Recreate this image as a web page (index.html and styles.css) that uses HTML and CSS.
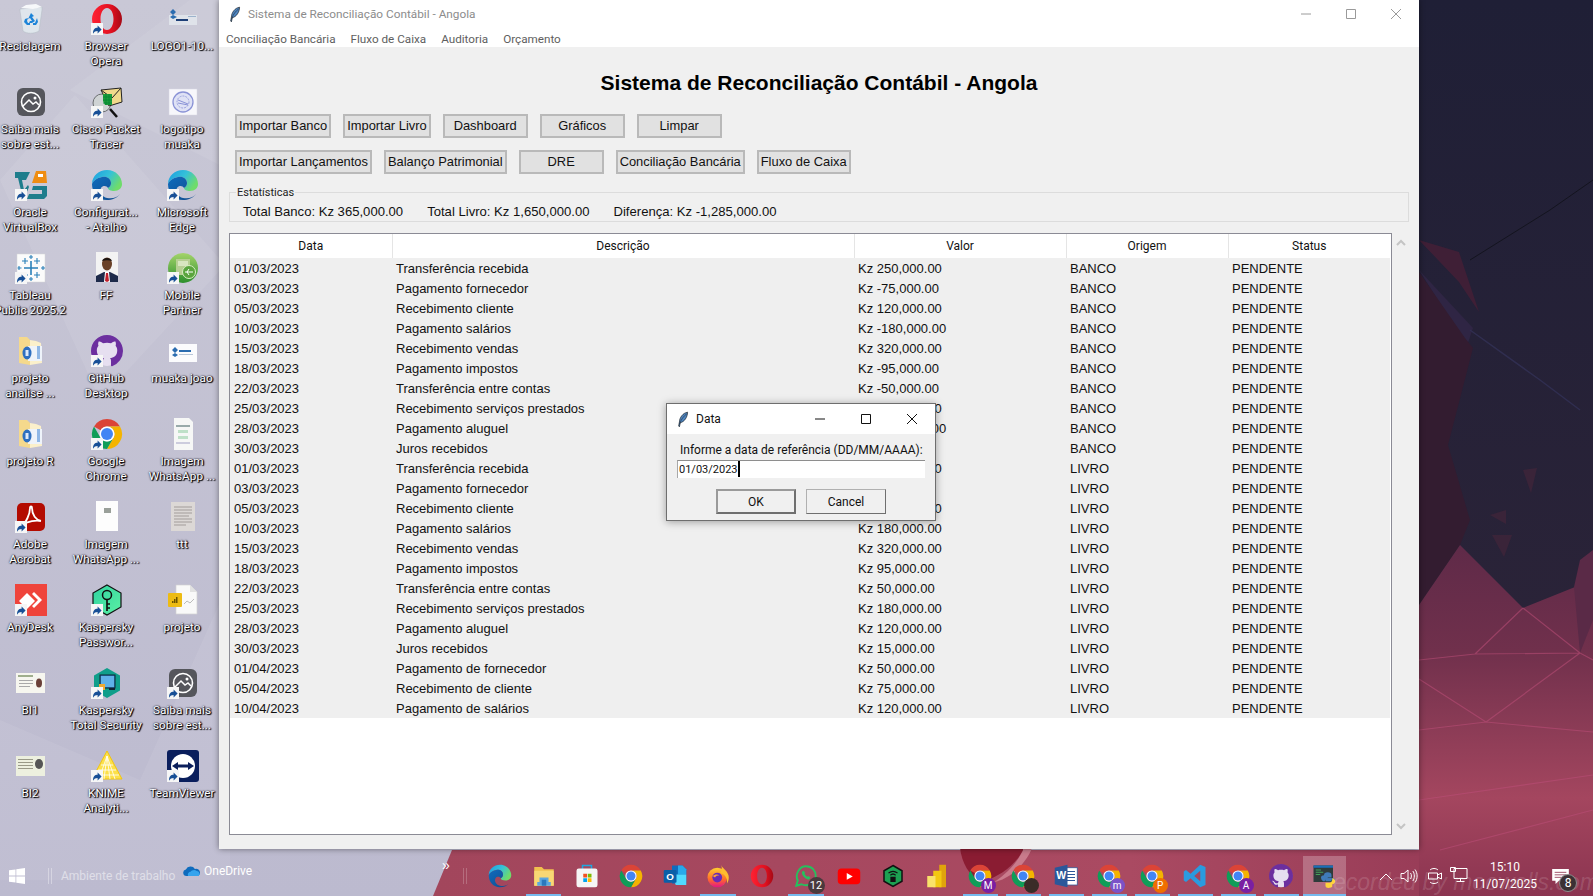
FILE: index.html
```html
<!DOCTYPE html>
<html lang="pt">
<head>
<meta charset="utf-8">
<title>Sistema de Reconciliação Contábil - Angola</title>
<link rel="stylesheet" href="styles.css">
</head>
<body>
<svg class="defs" width="0" height="0" aria-hidden="true">
  <defs>
    <linearGradient id="gEdge" x1="0" y1="0" x2="1" y2="0.5"><stop offset="0" stop-color="#1b9de2"/><stop offset="0.55" stop-color="#35c1d8"/><stop offset="1" stop-color="#6fdc6a"/></linearGradient>
    <linearGradient id="gEdgeB" x1="0" y1="0" x2="1" y2="1"><stop offset="0" stop-color="#0f6cbd"/><stop offset="1" stop-color="#114a8b"/></linearGradient>
    <linearGradient id="gGreen" x1="0" y1="0" x2="0" y2="1"><stop offset="0" stop-color="#a4d46a"/><stop offset="1" stop-color="#2c8f2c"/></linearGradient>
    <linearGradient id="gKey" x1="0" y1="0" x2="1" y2="1"><stop offset="0" stop-color="#2fd3a0"/><stop offset="1" stop-color="#5cf0a4"/></linearGradient>
    <linearGradient id="gFox" x1="0" y1="0" x2="0" y2="1"><stop offset="0" stop-color="#ffcf2e"/><stop offset="0.6" stop-color="#ff6a2a"/><stop offset="1" stop-color="#e31587"/></linearGradient>
    <linearGradient id="gOpera" x1="0" y1="0" x2="1" y2="0"><stop offset="0" stop-color="#ff2233"/><stop offset="0.65" stop-color="#e0101f"/><stop offset="1" stop-color="#a50a16"/></linearGradient>

    <symbol id="i-short" viewBox="0 0 12 12"><rect width="12" height="12" fill="#f6f6f6"/><path d="M2 10.800c0-4.300 1.600-6 4.600-6V2.500l4 4-4 4V8c-2 0-3.400.7-4.600 2.800z" fill="#174f96"/></symbol>

    <symbol id="i-recycle" viewBox="0 0 32 32"><path d="M5 6l22-2 0 3-3 21c-5 3-12 3-16 0L5 8z" fill="#dfe6ec" stroke="#b7c0c8" stroke-width=".6"/><path d="M6 5l5-3 10-1 6 3-9 2z" fill="#f6f8fa"/><path d="M16 10l3 3-2 1 3 4-3 2h-3l1-2h2l-2-3-2 1zM10 16l3-1-1 3 1 2h2v2h-3l-3-3zM22 15l1 4-2 3h-3v-2h2z" fill="#1d84d8"/></symbol>
    <symbol id="i-opera" viewBox="0 0 32 32"><path fill-rule="evenodd" d="M16 1a15 15 0 1 0 0 30 15 15 0 0 0 0-30zM16 5c4 0 6.500 5 6.500 11S20 27 16 27 9.500 22 9.500 16 12 5 16 5z" fill="url(#gOpera)"/></symbol>
    <symbol id="i-logo1" viewBox="0 0 32 32"><rect x="2" y="12" width="28" height="10" fill="#dfe3ea"/><path d="M3 9l3-3 3 3-3 3zM6 12l4 2-4 2-3-2z" fill="#2b6cb0"/><rect x="9" y="16" width="12" height="2" fill="#1d3f77"/><rect x="21" y="13" width="8" height="1" fill="#9cb3cc"/></symbol>
    <symbol id="i-photos" viewBox="0 0 32 32"><rect x="2" y="2" width="28" height="28" rx="6" fill="#55565c"/><circle cx="16" cy="16" r="9.500" fill="none" stroke="#fff" stroke-width="1.600"/><path d="M8 20l6-6 4 4 3-2 3 3" fill="none" stroke="#fff" stroke-width="1.500"/><circle cx="20" cy="12" r="1.500" fill="#fff"/></symbol>
    <symbol id="i-cisco" viewBox="0 0 32 32"><circle cx="11" cy="17" r="9" fill="#cfd3d4" stroke="#6d7072"/><path d="M10 4l20-2 1 14-13 4z" fill="#f1d98b" stroke="#222" stroke-width="1"/><path d="M10 4l11 8 9-10" fill="none" stroke="#222" stroke-width="1"/><path d="M12 8h9v11h-7l-2-4z" fill="#1e9b3c"/><path d="M12 11h9M12 14h9M12 17h9M15 8v11M18 8v11" stroke="#083" stroke-width=".8"/><path d="M19 23l7 8" stroke="#111" stroke-width="2.500"/></symbol>
    <symbol id="i-stamp" viewBox="0 0 32 32"><rect x="2" y="3" width="28" height="26" fill="#f7f7fb" stroke="#d8d8e2" stroke-width=".5"/><circle cx="16" cy="16" r="10" fill="#dfe2f5" stroke="#8a93d6" stroke-width="1.300"/><circle cx="16" cy="16" r="6" fill="none" stroke="#9aa2de" stroke-width="1" stroke-dasharray="2 1"/><path d="M11 14l10 4M11 17l10 2" stroke="#8a93d6"/></symbol>
    <symbol id="i-vbox" viewBox="0 0 32 32"><path d="M0 3h15l-4 8h-4l2 10 4-5 1 2-5 12H8L3 9H0z" fill="#1e7d8c"/><path d="M21 2h10l1 12H17z" fill="#ef8d12"/><rect x="23" y="5" width="5" height="3" fill="#fff"/><path d="M18 17h14v10l-3 3H12l2-5h13v-4H17z" fill="#1e7d8c"/></symbol>
    <symbol id="i-edge" viewBox="0 0 32 32"><path d="M1 15C1 7 8 1 16 1c9 0 15 7 15 14 0 4-3 7-8 7-3 0-6-1-6-3 2-1 3-3 3-5 0-4-4-7-9-6-5 1-9 4-10 7z" fill="url(#gEdge)"/><path d="M1 15c1-3 5-6 10-7 5-1 9 2 9 6 0 2-1 4-3 5-1-2-5-3-7 0-2 4 1 9 6 10 5 1 10 0 13-4-3 4-8 6-13 6C7 31 1 24 1 15z" fill="url(#gEdgeB)"/></symbol>
    <symbol id="i-tableau" viewBox="0 0 32 32"><rect x="2" y="2" width="28" height="28" fill="#fbfbfb" stroke="#d5d5d5" stroke-width=".5"/><path d="M16 9v14M9 16h14M13 16h6M16 13v6" stroke="#2a80b9" stroke-width="1.600"/><path d="M10 6v6M7 9h6M22 6v6M19 9h6M10 20v6M7 23h6M22 20v6M19 23h6M16 3v4M14 5h4M16 25v4M14 27h4M4 14v4M2.500 16h4M28 14v4M26 16h4" stroke="#2a80b9" stroke-width="1.100"/></symbol>
    <symbol id="i-person" viewBox="0 0 32 32"><rect x="5" y="0" width="22" height="30" fill="#f3f3f3"/><path d="M5 30v-6l8-4h6l8 4v6z" fill="#1e2a4a"/><path d="M14 20h4l1 10h-6z" fill="#fff"/><path d="M15 21h2l1 8-2 1-2-1z" fill="#c0202c"/><ellipse cx="16" cy="12" rx="5" ry="6.500" fill="#6a4128"/><path d="M11 9c1-4 9-4 10 0-3-1-7-1-10 0z" fill="#1c1410"/></symbol>
    <symbol id="i-mobile" viewBox="0 0 32 32"><circle cx="16" cy="16" r="15" fill="url(#gGreen)"/><rect x="9" y="7" width="14" height="16" fill="#b7cf93"/><rect x="11" y="9" width="10" height="5" fill="#d8e6c0"/><circle cx="22" cy="20" r="6.500" fill="#5aa53e" stroke="#dbeec6"/><path d="M18 20h8M22 17l-2 3 2 3" stroke="#fff" fill="none"/></symbol>
    <symbol id="i-folder" viewBox="0 0 32 32"><path d="M4 2h8l3 3v25l-11-2z" fill="#f5d98c"/><path d="M15 5l6 1 5 2 1 20-12 2z" fill="#fbf0cb"/><rect x="13" y="11" width="14" height="15" fill="#eef3fa"/><ellipse cx="12" cy="18" rx="4.500" ry="6.500" fill="#2d6fc0"/><rect x="10.500" y="15" width="3" height="6" fill="#dbe8fa"/><rect x="22" y="11" width="3" height="13" fill="#8fb7e6"/></symbol>
    <symbol id="i-github" viewBox="0 0 32 32"><circle cx="16" cy="16" r="15" fill="#e6dff0"/><path transform="scale(2)" d="M8 0C3.580 0 0 3.580 0 8c0 3.540 2.290 6.530 5.470 7.590.4.070.55-.17.55-.38 0-.19-.01-.82-.01-1.490-2.010.37-2.530-.49-2.690-.94-.09-.23-.48-.94-.82-1.130-.28-.15-.68-.52-.01-.53.63-.01 1.080.58 1.230.82.72 1.210 1.870.87 2.330.66.070-.52.280-.87.510-1.070-1.780-.2-3.640-.89-3.640-3.950 0-.87.310-1.590.820-2.150-.08-.2-.36-1.020.080-2.120 0 0 .67-.21 2.200.82.640-.18 1.320-.27 2-.27.680 0 1.360.09 2 .27 1.530-1.040 2.200-.82 2.200-.82.440 1.100.160 1.920.080 2.120.510.560.820 1.270.820 2.150 0 3.070-1.870 3.750-3.650 3.950.290.250.540.730.540 1.480 0 1.070-.01 1.930-.01 2.200 0 .21.150.46.550.38A8.013 8.013 0 0 0 16 8c0-4.420-3.580-8-8-8z" fill="#6c2f9f"/></symbol>
    <symbol id="i-logo2" viewBox="0 0 32 32"><rect x="2" y="9" width="28" height="18" fill="#fbfbfd"/><path d="M5 15l3-3 3 3-3 3zM8 18l3 2-3 2-3-2z" fill="#2b6cb0"/><rect x="12" y="15" width="12" height="2" fill="#2b6cb0"/><rect x="12" y="19" width="14" height="1" fill="#b8c6d8"/></symbol>
    <symbol id="i-chrome" viewBox="0 0 32 32"><path d="M3 8.500A15 15 0 0 1 29 8.500H16A7.500 7.500 0 0 0 9.500 12.250z" fill="#db4437"/><path d="M29 8.500A15 15 0 0 1 16 31L22.500 19.750A7.500 7.500 0 0 0 16 8.500z" fill="#f4b400"/><path d="M3 8.500L9.500 19.750A7.500 7.500 0 0 0 22.500 19.750L16 31A15 15 0 0 1 3 8.500z" fill="#0f9d58"/><circle cx="16" cy="16" r="7.500" fill="#fff"/><circle cx="16" cy="16" r="6" fill="#4285f4"/></symbol>
    <symbol id="i-wadoc" viewBox="0 0 32 32"><path d="M7 0h15l4 4v28H7z" fill="#f6f7f6"/><rect x="9" y="7" width="14" height="2" fill="#9aa"/><rect x="11" y="12" width="10" height="3" fill="#bfe0c8"/><rect x="11" y="18" width="10" height="3" fill="#bfe0c8"/><rect x="9" y="24" width="14" height="2" fill="#ccd"/></symbol>
    <symbol id="i-acrobat" viewBox="0 0 32 32"><rect x="2" y="2" width="28" height="28" rx="5" fill="#b30b00"/><path d="M7 24c4-2 8-11 8-17 0-2 2-2 2 0 0 7 4 12 9 13-5-1-13 0-19 4z" fill="none" stroke="#fff" stroke-width="1.800"/></symbol>
    <symbol id="i-blank" viewBox="0 0 32 32"><rect x="5" y="0" width="22" height="30" fill="#fdfdfd"/><rect x="13" y="7" width="7" height="5" fill="#9aa09a"/></symbol>
    <symbol id="i-textdoc" viewBox="0 0 32 32"><rect x="4" y="1" width="24" height="29" fill="#dcd8d6"/><path d="M7 6h18M7 9h18M7 12h18M7 15h15M7 18h18M7 21h18M7 24h12" stroke="#9b9694" stroke-width=".9"/></symbol>
    <symbol id="i-anydesk" viewBox="0 0 32 32"><rect width="32" height="32" fill="#ef443b"/><path d="M4 17l8-8 8 8-8 8z" fill="#fff"/><path d="M19 8l8 8-8 8-2-2 6-6-6-6z" fill="#fff"/></symbol>
    <symbol id="i-kpass" viewBox="0 0 32 32"><path d="M16 1l14 8v14l-14 8-14-8V9z" fill="url(#gKey)" stroke="#111" stroke-width="1.200"/><circle cx="16" cy="11" r="4.500" fill="none" stroke="#111" stroke-width="1.500"/><path d="M16 15v12M16 20h3M16 24h3" stroke="#111" stroke-width="1.700"/></symbol>
    <symbol id="i-pbix" viewBox="0 0 32 32"><path d="M9 1h14l7 7v22H9z" fill="#f9f9f9" stroke="#d2d2d2" stroke-width=".7"/><path d="M23 1v7h7" fill="#e2e2e2"/><path d="M17 20l3-3 3 2 4-4" fill="none" stroke="#bbb"/><rect x="1" y="9" width="14" height="14" rx="1" fill="#edbb13"/><path d="M5 19v-2h1.500v2zM7 19v-4h1.500v4zM9 19v-6h1.500v6z" fill="#6a5300"/></symbol>
    <symbol id="i-bi1" viewBox="0 0 32 32"><rect x="1" y="6" width="29" height="20" fill="#f6f6ef"/><rect x="3" y="8" width="15" height="2" fill="#9fae8d"/><rect x="4" y="13" width="14" height="1" fill="#a9a9a9"/><rect x="4" y="16" width="14" height="1" fill="#a9a9a9"/><rect x="4" y="19" width="11" height="1" fill="#a9a9a9"/><ellipse cx="24" cy="16" rx="3" ry="4.500" fill="#6a4038"/></symbol>
    <symbol id="i-bi2" viewBox="0 0 32 32"><rect x="1" y="6" width="29" height="20" fill="#edf0df"/><rect x="3" y="9" width="15" height="1" fill="#9a9a88"/><rect x="3" y="12" width="15" height="1" fill="#9a9a88"/><rect x="3" y="15" width="15" height="1" fill="#9a9a88"/><rect x="3" y="18" width="15" height="1" fill="#9a9a88"/><ellipse cx="24" cy="14" rx="4" ry="5" fill="#555"/></symbol>
    <symbol id="i-ktotal" viewBox="0 0 32 32"><path d="M16 1l13 7.500v15L16 31 3 23.500v-15z" fill="#0f9e8a"/><rect x="9" y="8" width="15" height="13" fill="#2f7fc0" stroke="#123"/><rect x="10" y="9" width="13" height="11" fill="#5fb1e8"/><rect x="8" y="17" width="6" height="6" fill="#eeaa33"/><rect x="18" y="21" width="6" height="2" fill="#123"/></symbol>
    <symbol id="i-knime" viewBox="0 0 32 32"><path d="M16 1L31 29H1z" fill="#fce04a" stroke="#f1c40f"/><path d="M16 6l-3 23M16 6l3 23M16 6L8 29M16 6l8 23M4 25h24M7 20h18M10 15h12" stroke="#fff" stroke-width=".8"/></symbol>
    <symbol id="i-tv" viewBox="0 0 32 32"><rect width="32" height="32" rx="3" fill="#0a1e5c"/><circle cx="16" cy="16" r="12" fill="#fff"/><path d="M5 16l6-4v2.500h10V12l6 4-6 4v-2.500H11V20z" fill="#0a1e5c"/></symbol>

    <symbol id="t-explorer" viewBox="0 0 32 32"><path d="M3 4h10l3 3h13v22H3z" fill="#f1c04e"/><path d="M3 9h26v20H3z" fill="#f8d774"/><path d="M10 18h12v6h3v5H7v-5h3z" fill="#5aa6e0"/><rect x="13" y="21" width="6" height="8" fill="#2a78bd"/></symbol>
    <symbol id="t-store" viewBox="0 0 32 32"><path d="M10 7V2h12v5" fill="none" stroke="#1fa7e0" stroke-width="2"/><rect x="2" y="6" width="28" height="25" rx="3" fill="#f5f5f5"/><rect x="11" y="13" width="5" height="5" fill="#f25022"/><rect x="17" y="13" width="5" height="5" fill="#7fba00"/><rect x="11" y="19" width="5" height="5" fill="#00a4ef"/><rect x="17" y="19" width="5" height="5" fill="#ffb900"/></symbol>
    <symbol id="t-outlook" viewBox="0 0 32 32"><path d="M12 2h14l5 5v19H12z" fill="#0f6cbd"/><path d="M20 2h6l5 5v7h-11z" fill="#28a8ea"/><path d="M12 14h19v14H17z" fill="#50d9ff"/><rect x="1" y="8" width="17" height="17" rx="1.500" fill="#0a5fa8"/><text x="9.500" y="21" class="svg-letter svg-letter-o">O</text></symbol>
    <symbol id="t-firefox" viewBox="0 0 32 32"><circle cx="15" cy="18" r="13" fill="url(#gFox)"/><path d="M20 1c1 4 8 7 10 14 1 4 0 8-2 11 1-8-4-13-9-14 2-4 3-7 1-11z" fill="#ffbd2e"/><circle cx="15" cy="18" r="6.500" fill="#6a2bb5"/><path d="M9 16c2-2 6-3 9-1-3 0-5 1-6 3z" fill="#ffa436"/></symbol>
    <symbol id="t-whatsapp" viewBox="0 0 32 32"><path d="M3 29l2-7C1 14 7 3 16 3c8 0 13 6 13 13 0 9-11 15-19 11z" fill="none" stroke="#25c15e" stroke-width="2.600"/><path d="M11 10c-2 3 3 10 9 11l2-3-3-2-1 1c-2-1-3-2-4-4l1-1-2-3z" fill="#25c15e"/></symbol>
    <symbol id="t-youtube" viewBox="0 0 32 32"><rect x="1" y="6" width="30" height="21" rx="5" fill="#ff0000"/><path d="M13 12l8 4.500-8 4.500z" fill="#fff"/></symbol>
    <symbol id="t-kvpn" viewBox="0 0 32 32"><path d="M16 2l12 7v14l-12 7-12-7V9z" fill="#1ca152" stroke="#111" stroke-width="2"/><path d="M10 12c4-3 8-3 12 0M12.500 15c2-2 5-2 7 0" fill="none" stroke="#111" stroke-width="1.500"/><rect x="12.500" y="17" width="7" height="7" fill="#111"/></symbol>
    <symbol id="t-pbi" viewBox="0 0 32 32"><rect x="19" y="1" width="9" height="30" fill="#e0a40c"/><rect x="11" y="9" width="11" height="22" fill="#f2c811"/><rect x="3" y="16" width="11" height="15" fill="#f9e26a"/></symbol>
    <symbol id="t-word" viewBox="0 0 32 32"><rect x="12" y="5" width="19" height="23" fill="#fff" stroke="#2b579a"/><path d="M15 10h13M15 14h13M15 18h13M15 22h13" stroke="#2b579a" stroke-width="1.500"/><path d="M1 5l17-4v30L1 27z" fill="#2b579a"/><text x="9.500" y="20" class="svg-letter svg-letter-w">W</text></symbol>
    <symbol id="t-vscode" viewBox="0 0 32 32"><path d="M23 1l7 3v24l-7 3-13-12-6 5-3-2v-12l3-2 6 5zM23 9l-8 7 8 7z" fill="#2a9bdf"/></symbol>
    <symbol id="t-python" viewBox="0 0 32 32"><rect x="2" y="2" width="26" height="22" fill="#2f3b3a"/><rect x="2" y="2" width="26" height="3" fill="#1b6fb8"/><path d="M5 8h7M5 11h10M5 14h6" stroke="#47a35a" stroke-width="1.300"/><path d="M16 15c0-3 2-4 5-4s5 1 5 4v3h-5v1h7c2 0 3 2 3 3l-10-2c-2 0-4 2-4 3h-2c-2-1-3-3-3-5s2-3 4-3z" fill="#3f7ab8"/><path d="M27 19c2 0 4 2 4 4s-2 4-4 4v3c0 1-3 2-5 2s-4-1-4-3v-4h6c1 0 3-2 3-4z" fill="#ffd43b"/><path d="M18 19h8v4h-8z" fill="#3f7ab8"/></symbol>
    <symbol id="t-feather" viewBox="0 0 16 20"><path d="M13 1C7 2 3 8 3 13l-1 5 1 1 1-5c5-1 9-7 9-13z" fill="#4f86c0" stroke="#10151c" stroke-width=".8"/><path d="M12 3C8 6 5 10 3.500 15" stroke="#10151c" stroke-width=".6" fill="none"/></symbol>
  </defs>
</svg>

<div class="desktop">
  <svg class="wallpaper" viewBox="0 0 1593 896" preserveAspectRatio="none" aria-hidden="true">
    <defs>
      <linearGradient id="wLav" x1="0" y1="0" x2="0" y2="1"><stop offset="0" stop-color="#c9c8d6"/><stop offset="1" stop-color="#bcbacf"/></linearGradient>
      <linearGradient id="wDark" x1="0" y1="0" x2="0" y2="1"><stop offset="0" stop-color="#1f1f36"/><stop offset="1" stop-color="#2a2338"/></linearGradient>
      <linearGradient id="wPink" x1="0" y1="0" x2="0" y2="1"><stop offset="0" stop-color="#5f2a48"/><stop offset="0.3" stop-color="#70304c"/><stop offset="0.72" stop-color="#a4465f"/><stop offset="1" stop-color="#8b3450"/></linearGradient>
      <linearGradient id="wBar" x1="0" y1="0" x2="1" y2="0"><stop offset="0" stop-color="#a2465c"/><stop offset="0.6" stop-color="#aa4a62"/><stop offset="1" stop-color="#8f3552"/></linearGradient>
    </defs>
    <rect width="1593" height="896" fill="url(#wLav)"/>
    <path d="M70 90L190 0h40v170zM0 180l75-85 150 170L100 400zM0 720l140 60 90-200v300H0z" fill="#ffffff" opacity=".07"/>
    <path d="M433 896L452 850H1593V896z" fill="url(#wBar)"/>
    <path d="M960 848h64c-6 14-22 28-42 34-14-6-20-20-22-34z" fill="#8a1c32"/>
    <path d="M1024 848c-4 10-14 24-30 34 12-2 30-14 38-34z" fill="#c97b8c"/>
    <rect x="1419" y="0" width="174" height="620" fill="url(#wDark)"/>
    <path d="M1419 270l54 58-6 18-48-76z" fill="#2f2544"/>
    <path d="M1419 240l40 12 20 60-20-30z" fill="#3f1f36"/>
    <path d="M1419 272l46 66 8 10-25 97 22 75-10 25-41 60z" fill="#331c30"/>
    <path d="M1470 330l70 50 40 30" stroke="#302e50" stroke-width="1.500" fill="none"/>
    <path d="M1470 260l80-50 43-30" stroke="#14141f" fill="none"/>
    <path d="M1492 535l20 0-8 22zM1490 515l16-5 0 14zM1523 470l14-2-6 25z" fill="#3a2439"/>
    <path d="M1460 545l63 63 57-23 13-30v341H1419V605z" fill="url(#wPink)"/>
    <path d="M1574 587l6-27 13-10v70l-13 33z" fill="#5a2a47"/>
    <path d="M1419 660l56-6 105-1 13 7M1523 608l-48 46M1523 608l57 45M1580 653l-94 69M1486 722l-67-43M1486 722l107 10M1419 730l67-8M1419 800l174-25M1440 850l153-40" stroke="#bc4f78" stroke-width="1.200" fill="none" opacity=".55"/>
  </svg>

  <main class="icons">
    <a class="dicon"><span class="ico"><svg><use href="#i-recycle"/></svg></span><span class="lbl">Reciclagem</span></a>
    <a class="dicon"><span class="ico"><svg><use href="#i-opera"/></svg><svg class="sc"><use href="#i-short"/></svg></span><span class="lbl">Browser<br>Opera</span></a>
    <a class="dicon"><span class="ico"><svg><use href="#i-logo1"/></svg></span><span class="lbl">LOGO1-10...</span></a>

    <a class="dicon"><span class="ico"><svg><use href="#i-photos"/></svg></span><span class="lbl">Saiba mais<br>sobre est...</span></a>
    <a class="dicon"><span class="ico"><svg><use href="#i-cisco"/></svg><svg class="sc"><use href="#i-short"/></svg></span><span class="lbl">Cisco Packet<br>Tracer</span></a>
    <a class="dicon"><span class="ico"><svg><use href="#i-stamp"/></svg></span><span class="lbl">logotipo<br>muaka</span></a>

    <a class="dicon"><span class="ico"><svg><use href="#i-vbox"/></svg><svg class="sc"><use href="#i-short"/></svg></span><span class="lbl">Oracle<br>VirtualBox</span></a>
    <a class="dicon"><span class="ico"><svg><use href="#i-edge"/></svg><svg class="sc"><use href="#i-short"/></svg></span><span class="lbl">Configurat...<br>- Atalho</span></a>
    <a class="dicon"><span class="ico"><svg><use href="#i-edge"/></svg><svg class="sc"><use href="#i-short"/></svg></span><span class="lbl">Microsoft<br>Edge</span></a>

    <a class="dicon"><span class="ico"><svg><use href="#i-tableau"/></svg><svg class="sc"><use href="#i-short"/></svg></span><span class="lbl">Tableau<br>Public 2025.2</span></a>
    <a class="dicon"><span class="ico"><svg><use href="#i-person"/></svg></span><span class="lbl">FF</span></a>
    <a class="dicon"><span class="ico"><svg><use href="#i-mobile"/></svg><svg class="sc"><use href="#i-short"/></svg></span><span class="lbl">Mobile<br>Partner</span></a>

    <a class="dicon"><span class="ico"><svg><use href="#i-folder"/></svg></span><span class="lbl">projeto<br>analise ...</span></a>
    <a class="dicon"><span class="ico"><svg><use href="#i-github"/></svg><svg class="sc"><use href="#i-short"/></svg></span><span class="lbl">GitHub<br>Desktop</span></a>
    <a class="dicon"><span class="ico"><svg><use href="#i-logo2"/></svg></span><span class="lbl">muaka joao</span></a>

    <a class="dicon"><span class="ico"><svg><use href="#i-folder"/></svg></span><span class="lbl">projeto R</span></a>
    <a class="dicon"><span class="ico"><svg><use href="#i-chrome"/></svg><svg class="sc"><use href="#i-short"/></svg></span><span class="lbl">Google<br>Chrome</span></a>
    <a class="dicon"><span class="ico"><svg><use href="#i-wadoc"/></svg></span><span class="lbl">Imagem<br>WhatsApp ...</span></a>

    <a class="dicon"><span class="ico"><svg><use href="#i-acrobat"/></svg><svg class="sc"><use href="#i-short"/></svg></span><span class="lbl">Adobe<br>Acrobat</span></a>
    <a class="dicon"><span class="ico"><svg><use href="#i-blank"/></svg></span><span class="lbl">Imagem<br>WhatsApp ...</span></a>
    <a class="dicon"><span class="ico"><svg><use href="#i-textdoc"/></svg></span><span class="lbl">ttt</span></a>

    <a class="dicon"><span class="ico"><svg><use href="#i-anydesk"/></svg><svg class="sc"><use href="#i-short"/></svg></span><span class="lbl">AnyDesk</span></a>
    <a class="dicon"><span class="ico"><svg><use href="#i-kpass"/></svg><svg class="sc"><use href="#i-short"/></svg></span><span class="lbl">Kaspersky<br>Passwor...</span></a>
    <a class="dicon"><span class="ico"><svg><use href="#i-pbix"/></svg></span><span class="lbl">projeto</span></a>

    <a class="dicon"><span class="ico"><svg><use href="#i-bi1"/></svg></span><span class="lbl">BI1</span></a>
    <a class="dicon"><span class="ico"><svg><use href="#i-ktotal"/></svg><svg class="sc"><use href="#i-short"/></svg></span><span class="lbl">Kaspersky<br>Total Security</span></a>
    <a class="dicon"><span class="ico"><svg><use href="#i-photos"/></svg><svg class="sc"><use href="#i-short"/></svg></span><span class="lbl">Saiba mais<br>sobre est...</span></a>

    <a class="dicon"><span class="ico"><svg><use href="#i-bi2"/></svg></span><span class="lbl">BI2</span></a>
    <a class="dicon"><span class="ico"><svg><use href="#i-knime"/></svg><svg class="sc"><use href="#i-short"/></svg></span><span class="lbl">KNIME<br>Analyti...</span></a>
    <a class="dicon"><span class="ico"><svg><use href="#i-tv"/></svg><svg class="sc"><use href="#i-short"/></svg></span><span class="lbl">TeamViewer</span></a>
  </main>

  <section class="window">
    <header class="titlebar">
      <svg class="feather"><use href="#t-feather"/></svg>
      <span class="title-text">Sistema de Reconciliação Contábil - Angola</span>
      <div class="controls">
        <svg class="ctl" viewBox="0 0 12 12"><path d="M1 6h10"/></svg>
        <svg class="ctl" viewBox="0 0 12 12"><path d="M1.500 1.500h9v9h-9z"/></svg>
        <svg class="ctl" viewBox="0 0 12 12"><path d="M1 1l10 10M11 1L1 11"/></svg>
      </div>
    </header>
    <nav class="menubar">
      <span>Conciliação Bancária</span><span>Fluxo de Caixa</span><span>Auditoria</span><span>Orçamento</span>
    </nav>
    <div class="client">
      <h1 class="app-title">Sistema de Reconciliação Contábil - Angola</h1>
      <div class="btn-row">
        <button class="btn">Importar Banco</button><button class="btn">Importar Livro</button><button class="btn">Dashboard</button><button class="btn">Gráficos</button><button class="btn">Limpar</button>
      </div>
      <div class="btn-row">
        <button class="btn">Importar Lançamentos</button><button class="btn">Balanço Patrimonial</button><button class="btn">DRE</button><button class="btn">Conciliação Bancária</button><button class="btn">Fluxo de Caixa</button>
      </div>
      <fieldset class="stats">
        <legend>Estatísticas</legend>
        <span>Total Banco: Kz 365,000.00</span><span>Total Livro: Kz 1,650,000.00</span><span>Diferença: Kz -1,285,000.00</span>
      </fieldset>
      <div class="grid-area">
        <div class="tree">
          <table>
            <colgroup><col class="c1"><col class="c2"><col class="c3"><col class="c4"><col class="c5"></colgroup>
            <thead><tr><th>Data</th><th>Descrição</th><th>Valor</th><th>Origem</th><th>Status</th></tr></thead>
            <tbody>
              <tr><td>01/03/2023</td><td>Transferência recebida</td><td>Kz 250,000.00</td><td>BANCO</td><td>PENDENTE</td></tr>
              <tr><td>03/03/2023</td><td>Pagamento fornecedor</td><td>Kz -75,000.00</td><td>BANCO</td><td>PENDENTE</td></tr>
              <tr><td>05/03/2023</td><td>Recebimento cliente</td><td>Kz 120,000.00</td><td>BANCO</td><td>PENDENTE</td></tr>
              <tr><td>10/03/2023</td><td>Pagamento salários</td><td>Kz -180,000.00</td><td>BANCO</td><td>PENDENTE</td></tr>
              <tr><td>15/03/2023</td><td>Recebimento vendas</td><td>Kz 320,000.00</td><td>BANCO</td><td>PENDENTE</td></tr>
              <tr><td>18/03/2023</td><td>Pagamento impostos</td><td>Kz -95,000.00</td><td>BANCO</td><td>PENDENTE</td></tr>
              <tr><td>22/03/2023</td><td>Transferência entre contas</td><td>Kz -50,000.00</td><td>BANCO</td><td>PENDENTE</td></tr>
              <tr><td>25/03/2023</td><td>Recebimento serviços prestados</td><td>Kz 180,000.00</td><td>BANCO</td><td>PENDENTE</td></tr>
              <tr><td>28/03/2023</td><td>Pagamento aluguel</td><td>Kz -120,000.00</td><td>BANCO</td><td>PENDENTE</td></tr>
              <tr><td>30/03/2023</td><td>Juros recebidos</td><td>Kz 15,000.00</td><td>BANCO</td><td>PENDENTE</td></tr>
              <tr><td>01/03/2023</td><td>Transferência recebida</td><td>Kz 250,000.00</td><td>LIVRO</td><td>PENDENTE</td></tr>
              <tr><td>03/03/2023</td><td>Pagamento fornecedor</td><td>Kz 75,000.00</td><td>LIVRO</td><td>PENDENTE</td></tr>
              <tr><td>05/03/2023</td><td>Recebimento cliente</td><td>Kz 120,000.00</td><td>LIVRO</td><td>PENDENTE</td></tr>
              <tr><td>10/03/2023</td><td>Pagamento salários</td><td>Kz 180,000.00</td><td>LIVRO</td><td>PENDENTE</td></tr>
              <tr><td>15/03/2023</td><td>Recebimento vendas</td><td>Kz 320,000.00</td><td>LIVRO</td><td>PENDENTE</td></tr>
              <tr><td>18/03/2023</td><td>Pagamento impostos</td><td>Kz 95,000.00</td><td>LIVRO</td><td>PENDENTE</td></tr>
              <tr><td>22/03/2023</td><td>Transferência entre contas</td><td>Kz 50,000.00</td><td>LIVRO</td><td>PENDENTE</td></tr>
              <tr><td>25/03/2023</td><td>Recebimento serviços prestados</td><td>Kz 180,000.00</td><td>LIVRO</td><td>PENDENTE</td></tr>
              <tr><td>28/03/2023</td><td>Pagamento aluguel</td><td>Kz 120,000.00</td><td>LIVRO</td><td>PENDENTE</td></tr>
              <tr><td>30/03/2023</td><td>Juros recebidos</td><td>Kz 15,000.00</td><td>LIVRO</td><td>PENDENTE</td></tr>
              <tr><td>01/04/2023</td><td>Pagamento de fornecedor</td><td>Kz 50,000.00</td><td>LIVRO</td><td>PENDENTE</td></tr>
              <tr><td>05/04/2023</td><td>Recebimento de cliente</td><td>Kz 75,000.00</td><td>LIVRO</td><td>PENDENTE</td></tr>
              <tr><td>10/04/2023</td><td>Pagamento de salários</td><td>Kz 120,000.00</td><td>LIVRO</td><td>PENDENTE</td></tr>
            </tbody>
          </table>
        </div>
        <div class="scrollbar">
          <svg class="chev" viewBox="0 0 10 8"><path d="M1 6l4-4 4 4"/></svg>
          <svg class="chev" viewBox="0 0 10 8"><path d="M1 2l4 4 4-4"/></svg>
        </div>
      </div>
    </div>
  </section>

  <section class="dialog">
    <header class="dlg-title">
      <svg class="feather"><use href="#t-feather"/></svg>
      <span class="dlg-name">Data</span>
      <div class="dlg-controls">
        <svg class="ctl dark" viewBox="0 0 12 12"><path d="M1 6h10"/></svg>
        <svg class="ctl dark" viewBox="0 0 12 12"><path d="M1.500 1.500h9v9h-9z"/></svg>
        <svg class="ctl dark" viewBox="0 0 12 12"><path d="M1 1l10 10M11 1L1 11"/></svg>
      </div>
    </header>
    <div class="dlg-body">
      <p class="dlg-label">Informe a data de referência (DD/MM/AAAA):</p>
      <div class="entry">01/03/2023<i class="caret"></i></div>
      <div class="dlg-btns">
        <button class="dbtn default">OK</button>
        <button class="dbtn">Cancel</button>
      </div>
    </div>
  </section>

  <footer class="taskbar">
    <svg class="start" viewBox="0 0 16 16"><path d="M0 2.300L6.500 1.400V7.600H0zM7.300 1.300L16 0V7.600H7.300zM0 8.400H6.500V14.600L0 13.700zM7.300 8.400H16V16L7.300 14.700z"/></svg>
    <span class="sep"></span>
    <span class="tb-link">Ambiente de trabalho</span>
    <svg class="onedrive" viewBox="0 0 20 14"><path d="M4 13a4 4 0 0 1-.6-7.900A6 6 0 0 1 14 4.500a4.500 4.500 0 0 1 6 4.500c0 2-1.500 4-3.500 4z" fill="#0f6cbd"/><path d="M6 13c-1-3 1-5 3-5 1-2 5-3 7-1 2 0 4 2 3.500 4-.5 1-1.500 2-3 2z" fill="#35a4ee"/></svg>
    <span class="tb-od">OneDrive</span>
    <span class="more">»</span>
    <span class="sep sep-apps"></span>
    <div class="apps">
      <span class="app"><svg><use href="#i-edge"/></svg></span>
      <span class="app on"><svg><use href="#t-explorer"/></svg></span>
      <span class="app"><svg><use href="#t-store"/></svg></span>
      <span class="app"><svg><use href="#i-chrome"/></svg></span>
      <span class="app"><svg><use href="#t-outlook"/></svg></span>
      <span class="app on"><svg><use href="#t-firefox"/></svg></span>
      <span class="app"><svg><use href="#i-opera"/></svg></span>
      <span class="app on"><svg><use href="#t-whatsapp"/></svg><b class="badge b-num">12</b></span>
      <span class="app"><svg><use href="#t-youtube"/></svg></span>
      <span class="app"><svg><use href="#t-kvpn"/></svg></span>
      <span class="app"><svg><use href="#t-pbi"/></svg></span>
      <span class="app on"><svg><use href="#i-chrome"/></svg><b class="badge b-m">M</b></span>
      <span class="app on"><svg><use href="#i-chrome"/></svg><b class="badge b-photo"></b></span>
      <span class="app on"><svg><use href="#t-word"/></svg></span>
      <span class="app on"><svg><use href="#i-chrome"/></svg><b class="badge b-l">m</b></span>
      <span class="app on"><svg><use href="#i-chrome"/></svg><b class="badge b-p">P</b></span>
      <span class="app on"><svg><use href="#t-vscode"/></svg></span>
      <span class="app on"><svg><use href="#i-chrome"/></svg><b class="badge b-m">A</b></span>
      <span class="app on"><svg><use href="#i-github"/></svg></span>
      <span class="app on active"><svg><use href="#t-python"/></svg></span>
    </div>
    <span class="watermark">ecorded by moowells.com</span>
    <div class="tray">
      <svg class="tr tr-chev" viewBox="0 0 14 14"><path d="M1 10l6-6 6 6"/></svg>
      <svg class="tr tr-vol" viewBox="0 0 18 16"><path d="M1 5.500h3l4-3.500v12l-4-3.500H1zM10.500 5c1.200 1.500 1.200 4.500 0 6M12.800 3c2 2.500 2 7.500 0 10M15 1.500c2.800 3.500 2.800 9.500 0 13"/></svg>
      <svg class="tr tr-cam" viewBox="0 0 16 18"><path d="M3 3c2-2 6-2 8 0M3 15c2 2 6 2 8 0M1.500 6h9v6h-9zM10.500 8l4-2v6l-4-2z"/></svg>
      <svg class="tr tr-net" viewBox="0 0 18 16"><path d="M4 1.500h13v10H4zM10.500 11.500v3M6.500 14.500h8M.5.500h5v4h-5z"/></svg>
      <div class="clock"><span>15:10</span><span>11/07/2025</span></div>
      <div class="notif">
        <svg class="notif-ico" viewBox="0 0 20 18"><path d="M0 0h20v14H8l-4 4v-4H0z" fill="#fff"/><path d="M3 4h14M3 7h14M3 10h10" stroke="#8f3552"/></svg>
        <b class="n-badge">8</b>
      </div>
    </div>
  </footer>
</div>
</body>
</html>
```

FILE: styles.css
```css
* { box-sizing: border-box; }
html, body { margin: 0; padding: 0; height: 100%; overflow: hidden; }
body { font-family: "Liberation Sans", Arial, sans-serif; background: #c0bdd4; }

.defs { position: absolute; }
.desktop { position: relative; width: 1593px; height: 896px; overflow: hidden; }
.wallpaper { position: absolute; inset: 0; width: 1593px; height: 896px; }

/* desktop icons */
.icons {
  position: absolute; left: -8px; top: 0;
  display: grid;
  grid-template-columns: repeat(3, 76px);
  grid-auto-rows: 83px;
}
.dicon { display: flex; flex-direction: column; align-items: center; padding-top: 3px; }
.ico { position: relative; display: block; width: 32px; height: 32px; flex: none; left: 1px; }
.ico svg { display: block; width: 32px; height: 32px; }
.ico .sc { position: absolute; left: 0; bottom: 0; width: 12px; height: 12px; }
.lbl {
  display: block;
  margin-top: 4px;
  width: 76px;
  font: 11.800px/15px Roboto, "Noto Sans", sans-serif;
  color: #fff;
  text-align: center;
  white-space: nowrap;
  text-shadow: 1px 1px 1px #000, 0 0 2px #000, 1px 0 1px #0a1450;
}

/* main window */
.window {
  position: absolute; left: 219px; top: 0;
  width: 1200px; height: 849px;
  background: #f0f0f0;
  box-shadow: 0 0 6px rgba(0,0,0,.45);
  display: flex; flex-direction: column;
}
.titlebar { height: 28px; background: #fff; display: flex; align-items: center; padding-left: 10px; flex: none; }
.feather { width: 13px; height: 17px; flex: none; }
.title-text { margin-left: 6px; font: 11.800px/16px Roboto, sans-serif; color: #8c8c8c; }
.controls { margin-left: auto; display: flex; gap: 33px; padding-right: 17px; }
.ctl { width: 12px; height: 12px; fill: none; stroke: #9a9a9a; stroke-width: 1; }
.ctl.dark { stroke: #111; }
.menubar {
  height: 19px; background: #fff; flex: none;
  display: flex; gap: 15px; padding: 3px 0 0 7px;
  font: 11.700px/16px Roboto, sans-serif; color: #5e5e5e;
}
.client { flex: 1; padding: 0 10px; display: flex; flex-direction: column; min-height: 0; }
.app-title { margin: 23px 0 18px; font: bold 21px/26px "Liberation Sans", Arial, sans-serif; color: #000; text-align: center; }
.btn-row { display: flex; gap: 12px; padding-left: 6px; margin-bottom: 12px; }
.btn {
  height: 24px; min-width: 85px; padding: 0 2px;
  background: #e1e1e1;
  border: 2px solid #b9b9b9;
  font: 12.900px/20px "Liberation Sans", Arial, sans-serif; color: #111;
  white-space: nowrap;
}
.stats {
  margin: -1px 0 11px; padding: 4px 0 1px 13px;
  border: 1px solid #dcdcdc;
  min-width: 0;
  font: 13.100px/16px "Liberation Sans", Arial, sans-serif; color: #111;
  display: flex; gap: 24px;
}
.stats legend { margin-left: -7px; padding: 0 1px; font: 11px/15px Roboto, sans-serif; color: #222; }
.grid-area { display: flex; height: 602px; flex: none; }
.tree { width: 1163px; height: 602px; border: 1px solid #8b8b95; background: #fff; }
.tree table { width: 1160px; border-collapse: collapse; table-layout: fixed; }
.c1 { width: 162px; } .c2 { width: 462px; } .c3 { width: 212px; } .c4 { width: 162px; } .c5 { width: 162px; }
.tree th {
  height: 24px; padding: 0;
  background: #fff;
  border-right: 1px solid #e5e5e5;
  font: 12px/16px Roboto, sans-serif; color: #111;
}
.tree th:last-child { border-right: 0; }
.tree td {
  height: 20px; padding: 1px 0 0 4px;
  background: #efefef;
  font: 13px/19px "Liberation Sans", Arial, sans-serif; color: #111;
  white-space: nowrap; overflow: hidden;
}
.scrollbar {
  flex: 1; display: flex; flex-direction: column; justify-content: space-between; align-items: center;
  padding: 6px 0 5px;
}
.chev { width: 10px; height: 8px; fill: none; stroke: #c4c4c4; stroke-width: 2; }

/* dialog */
.dialog {
  position: absolute; left: 666px; top: 403px;
  width: 270px; height: 118px;
  background: #f0f0f0;
  border: 1px solid #6e6e6e;
  box-shadow: 0 1px 8px rgba(0,0,0,.35);
  display: flex; flex-direction: column;
}
.dlg-title { height: 30px; background: #fff; display: flex; align-items: center; padding-left: 10px; flex: none; }
.dlg-name { margin-left: 6px; font: 12px/16px Roboto, sans-serif; color: #111; }
.dlg-controls { margin-left: auto; display: flex; gap: 34px; padding-right: 17px; }
.dlg-body { padding: 8px 10px 0; }
.dlg-label { margin: 0 0 0 3px; font: 12px/16px Roboto, sans-serif; color: #111; white-space: nowrap; }
.entry {
  margin-top: 2px;
  height: 18px; background: #fff;
  border-top: 1px solid #8e8e8e; border-left: 1px solid #a8a8a8;
  font: 11px/18px Roboto, sans-serif; color: #111;
  padding-left: 1px;
  display: flex;
}
.caret { display: block; width: 2px; height: 16px; background: #000; }
.dlg-btns { display: flex; gap: 10px; margin-top: 11px; padding-left: 39px; }
.dbtn {
  width: 80px; height: 25px;
  background: #f0f0f0;
  border: 1px solid #b0b0b0;
  border-right-color: #6f6f6f; border-bottom-color: #6f6f6f;
  font: 12px/16px Roboto, sans-serif; color: #111;
}
.dbtn.default { border: 2px solid #6f6f6f; border-top-color: #9a9a9a; border-left-color: #9a9a9a; }

/* taskbar */
.taskbar {
  position: absolute; left: 0; top: 856px;
  width: 1593px; height: 40px;
  display: flex; align-items: center;
  font-family: Roboto, sans-serif;
}
.start { width: 16px; height: 16px; margin-left: 9px; fill: #fff; flex: none; }
.sep { width: 4px; height: 16px; margin-left: 23px; border-left: 1px solid rgba(255,255,255,.35); border-right: 1px solid rgba(255,255,255,.35); flex: none; }
.tb-link { margin-left: 9px; width: 119px; font-size: 12px; color: rgba(255,255,255,.5); white-space: nowrap; flex: none; }
.onedrive { width: 17px; height: 12px; margin-left: 3px; margin-bottom: 10px; flex: none; }
.tb-od { margin-left: 4px; margin-bottom: 10px; font-size: 12px; color: #fff; width: 49px; flex: none; }
.more { margin-left: 189px; margin-bottom: 22px; font: 14px/14px "Liberation Sans", sans-serif; color: #fff; width: 11px; flex: none; }
.sep-apps { margin-left: 10px; height: 16px; opacity: .6; }
.apps { display: flex; margin-left: 11px; height: 40px; flex: none; }
.app { position: relative; width: 43px; height: 40px; display: flex; align-items: center; justify-content: center; flex: none; }
.app:nth-child(-n+11) { width: 43.700px; }
.app svg { width: 24px; height: 24px; display: block; }
.app.on::after {
  content: ""; position: absolute; left: 4px; right: 4px; bottom: 0; height: 2px; background: #76b9ed;
}
.app.active { background: rgba(255,255,255,.24); }
.app.active::after { left: 0; right: 0; }
.badge {
  position: absolute; right: 6px; bottom: 3px;
  width: 15px; height: 15px; border-radius: 50%;
  font: 10px/15px Roboto, sans-serif; color: #fff; text-align: center;
}
.b-num { background: #4a3a3e; width: 17px; height: 17px; font: 11px/17px Roboto, sans-serif; right: 3px; bottom: 2px; }
.b-m { background: #7a1fa2; }
.b-l { background: #7c52c8; }
.b-p { background: #f06f00; }
.b-photo { background: #3a2c28; }
.tray { position: absolute; left: 0; top: 0; width: 1593px; height: 40px; pointer-events: none; }
.tr { position: absolute; fill: none; stroke: #fff; stroke-width: 1; }
.tr-chev { left: 1379px; top: 14px; width: 14px; height: 14px; }
.tr-vol { left: 1400px; top: 12px; width: 18px; height: 16px; }
.tr-cam { left: 1427px; top: 11px; width: 16px; height: 18px; }
.tr-net { left: 1450px; top: 11px; width: 18px; height: 16px; }
.clock {
  position: absolute; left: 1475px; top: 3px; width: 60px;
  display: flex; flex-direction: column; align-items: center;
  font: 12px/17px Roboto, sans-serif; color: #fff;
}
.notif { position: absolute; left: 1552px; top: 13px; width: 28px; height: 26px; }
.notif-ico { width: 17px; height: 15px; display: block; }
.n-badge {
  position: absolute; left: 7px; top: 5px; width: 18px; height: 18px; border-radius: 50%;
  background: #3b3034; border: 1px solid #8d8d8d;
  font: 12px/16px Roboto, sans-serif; color: #fff; text-align: center;
}
.watermark {
  position: absolute; left: 1333px; top: 11px;
  font: italic 23px/30px "Liberation Sans", sans-serif;
  color: rgba(255,255,255,.15);
  white-space: nowrap;
}
.svg-letter { fill: #fff; font-family: "Liberation Sans", sans-serif; font-weight: bold; text-anchor: middle; }
.svg-letter-o { font-size: 13px; }
.svg-letter-w { font-size: 14px; }
```
